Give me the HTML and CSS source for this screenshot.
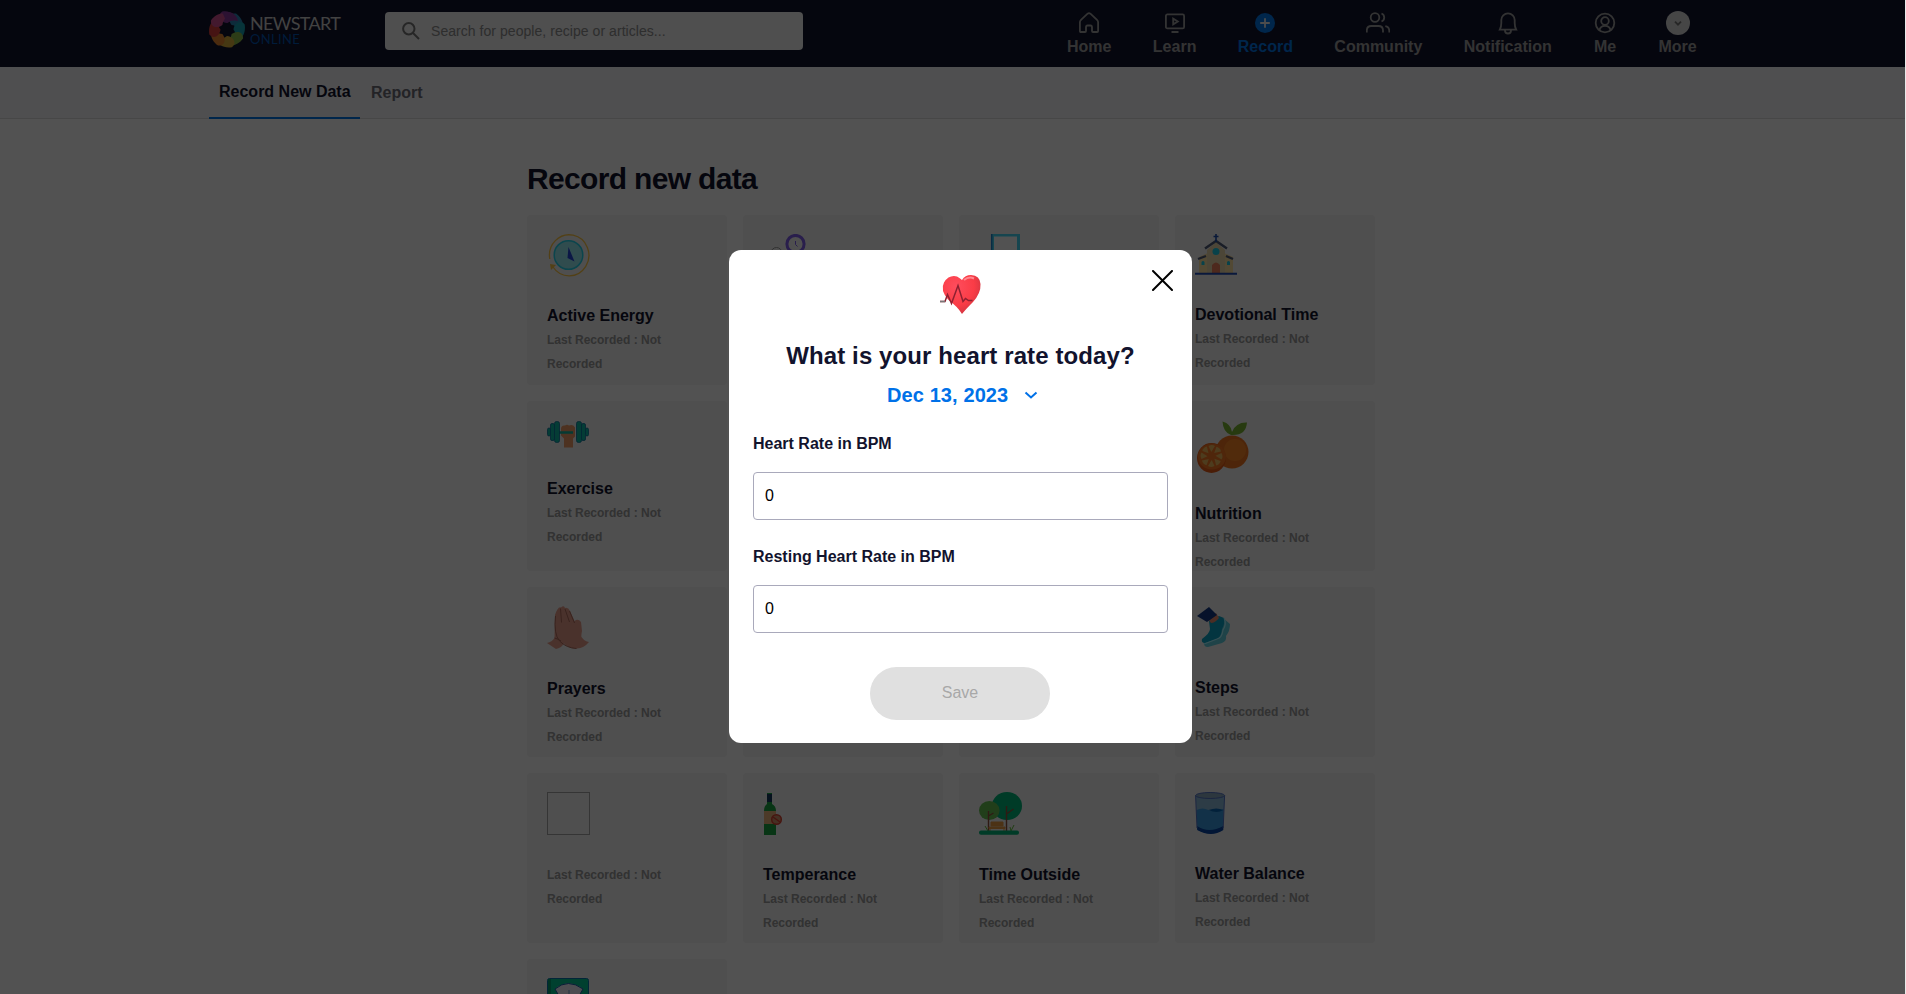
FILE: index.html
```html
<!DOCTYPE html>
<html lang="en">
<head>
<meta charset="utf-8">
<title>Newstart Online - Record New Data</title>
<link rel="stylesheet" href="styles.css">
</head>
<body>
<div class="app">
  <header class="topbar">
    <a class="brand">
      <svg class="brand-mark" width="36" height="37" viewBox="0 0 36 37">
        <defs><path id="leaf" d="M18 12C11 11 8 5 13 0.8C21-.5 28 3 29 10C26 9 22 9 18 12Z"/></defs>
        <g>
          <use href="#leaf" fill="#8a3a9c"/>
          <use href="#leaf" fill="#2b86b8" transform="rotate(45 18 18.5)"/>
          <use href="#leaf" fill="#16a3b5" transform="rotate(90 18 18.5)"/>
          <use href="#leaf" fill="#8cba4a" transform="rotate(135 18 18.5)"/>
          <use href="#leaf" fill="#d9ad3c" transform="rotate(180 18 18.5)"/>
          <use href="#leaf" fill="#e8862f" transform="rotate(225 18 18.5)"/>
          <use href="#leaf" fill="#d8403c" transform="rotate(270 18 18.5)"/>
          <use href="#leaf" fill="#d0508e" transform="rotate(315 18 18.5)"/>
          <path d="M13 .8C21-.5 28 3 29 10C26 9 22 9 18 12Z" fill="#8a3a9c"/>
        </g>
        <circle cx="18" cy="18.5" r="5.6" fill="#12132d"/>
      </svg>
      <span class="brand-text"><span class="brand-top">NEWSTART</span><span class="brand-sub">ONLINE</span></span>
    </a>
    <div class="search">
      <svg width="18" height="18" viewBox="0 0 18 18" fill="none" stroke="#777" stroke-width="2"><circle cx="6.8" cy="6.8" r="5.7"/><path d="M11 11l6 6"/></svg>
      <span>Search for people, recipe or articles...</span>
    </div>
    <nav class="nav">
      <a class="nav-item"><svg width="24" height="24" viewBox="0 0 24 24"><path d="M2.9 11.2Q2.9 9.8 4 8.8L10.600 2.700Q12 1.600 13.400 2.700L20 8.800Q21.100 9.800 21.100 11.200V20Q21.100 21 20.100 21H16Q15 21 15 20V16.500Q15 14.500 13.500 14.500H10.500Q9 14.500 9 16.500V20Q9 21 8 21H3.900Q2.900 21 2.900 20Z"/></svg><span>Home</span></a>
      <a class="nav-item"><svg width="24" height="24" viewBox="0 0 24 24"><rect x="2.900" y="3.400" width="18.200" height="14" rx="1.500"/><path d="M10.200 7.700v5.600l4.600-2.800zM8.500 21h7"/></svg><span>Learn</span></a>
      <a class="nav-item active"><svg width="24" height="24" viewBox="0 0 24 24"><circle cx="12" cy="12" r="10" fill="#0076e8" stroke="none"/><path d="M12 7.200v9.600M7.200 12h9.600" stroke="#eee"/></svg><span>Record</span></a>
      <a class="nav-item"><svg width="24" height="24" viewBox="0 0 24 24"><circle cx="9" cy="6.500" r="4.300"/><path d="M15.500 2.500a4.300 4.300 0 0 1 0 8M.8 21.500v-2Q.8 15 5.300 15H12.500Q17 15 17 19.500v2M19.300 15.200Q23.300 16 23.300 20v1.500"/></svg><span>Community</span></a>
      <a class="nav-item"><svg width="24" height="24" viewBox="0 0 24 24"><path d="M3.800 18.700Q5.300 16 5.300 12V9a6.700 6.700 0 0 1 13.400 0v3Q18.700 16 20.200 18.700ZM9 19.500a3 3 0 0 0 6 0"/></svg><span>Notification</span></a>
      <a class="nav-item"><svg width="24" height="24" viewBox="0 0 24 24"><circle cx="12" cy="12" r="9.300"/><circle cx="12" cy="10" r="3.800"/><path d="M6.500 19.500Q7 14.800 12 14.800T17.500 19.500"/></svg><span>Me</span></a>
      <a class="nav-item"><svg width="24" height="24" viewBox="0 0 24 24"><circle cx="12" cy="12" r="12" fill="#d8d8d8" stroke="none"/><path d="M9 10.700l3 3 3-3" stroke="#777"/></svg><span>More</span></a>
    </nav>
  </header>
  <div class="tabs">
    <a class="tab current">Record New Data</a>
    <a class="tab">Report</a>
  </div>
  <main class="content">
    <h1>Record new data</h1>
    <div class="grid">
      <section class="card">
        <svg width="43" height="43" viewBox="0 0 43 43"><path d="M2.800 25A19.700 20.500 0 1 1 6 33" fill="none" stroke="#d99a35" stroke-width="1.300"/><path d="M3 30l6 1-5 5z" fill="#d99a35"/><circle cx="21.500" cy="21" r="14.300" fill="#74b5ba" stroke="#1ba5b8" stroke-width="1.500"/><path d="M21.500 13l-1 11 7 3.500z" fill="#1c38a8"/></svg>
        <h2>Active Energy</h2><p>Last Recorded : Not Recorded</p>
      </section>
      <section class="card">
        <svg width="43" height="43" viewBox="0 0 43 43" fill="none"><circle cx="32.500" cy="10" r="8.600" stroke="#6348b5" stroke-width="3"/><path d="M32.500 7v3.500l2 2" stroke="#6348b5"/><circle cx="13.500" cy="19" r="5.500" stroke="#777"/></svg>
      </section>
      <section class="card">
        <svg width="43" height="43" viewBox="0 0 43 43"><rect x="13.500" y="1" width="26" height="40" fill="#c3c8d6" stroke="#35a5bd" stroke-width="3"/><path d="M12.700 0v43" stroke="#1766a0" stroke-width="1.500"/></svg>
      </section>
      <section class="card">
        <svg width="42" height="42" viewBox="0 0 42 42"><path d="M4 23l9-4v20H4zM29 19l9 4v16h-9z" fill="#c4ae7c"/><path d="M12 16l9-8 9 8v23H12z" fill="#b5a684"/><path d="M10 14.500l11-7.500 11 7.500M3 25l8-3M31 22l7 3" fill="none" stroke="#3d465c" stroke-width="2.400"/><path d="M21 0v8M18.500 2.500h5" stroke="#173c87" stroke-width="1.600"/><circle cx="21" cy="17.500" r="3.500" fill="#149db2"/><path d="M6.500 31v-3q1.500-2 3 0v3zM32 31v-3q1.500-2 3 0v3z" fill="#149db2"/><path d="M17 39v-8q4-5 8 0v8z" fill="#b86346"/><path d="M0 39.700h42" stroke="#183b8d" stroke-width="2"/></svg>
        <h2>Devotional Time</h2><p>Last Recorded : Not Recorded</p>
      </section>
      <section class="card">
        <svg width="43" height="30" viewBox="0 0 43 30"><path d="M14 9q0-4 4-3.500 2-1.500 4 0 4-1.500 6 2v9l-2 2v9H17v-9l-3-3z" fill="#b87950"/><path d="M12 12.500h14" stroke="#0d8a7a" stroke-width="2.500"/><g fill="#0a8f7f" stroke="#07597a" stroke-width=".8"><rect x=".5" y="8" width="3" height="8" rx="1.500"/><rect x="3.500" y="3.500" width="4" height="17" rx="1.500"/><rect x="7.500" y="1.500" width="5" height="21" rx="2"/><rect x="29.500" y="1.500" width="5" height="21" rx="2"/><rect x="34.500" y="3.500" width="4" height="17" rx="1.500"/><rect x="38.500" y="8" width="3" height="8" rx="1.500"/></g></svg>
        <h2>Exercise</h2><p>Last Recorded : Not Recorded</p>
      </section>
      <section class="card"></section>
      <section class="card"></section>
      <section class="card">
        <svg width="56" height="55" viewBox="0 0 56 55"><circle cx="37" cy="32" r="16.500" fill="#b85a18"/><circle cx="40" cy="30" r="11" fill="#c0681f"/><path d="M36 15Q28 12 27.500 1.500 36 4 37 12 41 2 52 2.500 51 16 36 15Z" fill="#5e8b28"/><ellipse cx="16.500" cy="38" rx="14.500" ry="15" fill="#b04612"/><ellipse cx="17" cy="36.500" rx="14" ry="13" fill="#bd5c1a"/><g fill="#b98f48"><path id="seg" d="M16.300 32l-2.800-6q3.500-2 6.500 0z"/><use href="#seg" transform="rotate(45 16.500 36)"/><use href="#seg" transform="rotate(90 16.500 36)"/><use href="#seg" transform="rotate(135 16.500 36)"/><use href="#seg" transform="rotate(180 16.500 36)"/><use href="#seg" transform="rotate(225 16.500 36)"/><use href="#seg" transform="rotate(270 16.500 36)"/><use href="#seg" transform="rotate(315 16.500 36)"/></g></svg>
        <h2>Nutrition</h2><p>Last Recorded : Not Recorded</p>
      </section>
      <section class="card">
        <svg width="43" height="44" viewBox="0 0 43 44"><path d="M8 9Q11 0 14 1.500q3-2.500 4 .5Q21 1 23 5l4.500 10Q31 12 34 16l1 9q-1 5-.5 6 3 4.500 7.500 5-5 6-12 6.500-8 .5-13-5Q14 42 9 43L0 37q5-1 7.500-5z" fill="#b2786a"/><path d="M8.500 10q-2 18 4 25 7 7 17 7.500M13.500 2.500l1 14M18 3l4.500 13M22.500 5l5 12M7.500 32q4 1 6.500 3" fill="none" stroke="#865347" stroke-width="1"/></svg>
        <h2>Prayers</h2><p>Last Recorded : Not Recorded</p>
      </section>
      <section class="card"></section>
      <section class="card"></section>
      <section class="card">
        <svg width="43" height="43" viewBox="0 0 43 43"><path d="M28 12l7 6q0 7-4 12 1 5-4 7l-14 4q-5 0-4-6z" fill="#4aa0ac"/><path d="M14 15l10-5 5 2q1 6-2 11-1 8-5 10l-12 4q-4 0-3-4 8-6 8-10z" fill="#087f98"/><path d="M29 12q3 6-1 12-1 8-6 9l-13 5" fill="none" stroke="#83bfcb" stroke-width="1.200"/><path d="M13 13l8-6 3 5q-4 5-8 5z" fill="#b46c56"/><path d="M2 10L14 1l8 8-10 7z" fill="#102c66"/></svg>
        <h2>Steps</h2><p>Last Recorded : Not Recorded</p>
      </section>
      <section class="card">
        <div class="missing"></div>
        <p>Last Recorded : Not Recorded</p>
      </section>
      <section class="card">
        <svg width="43" height="44" viewBox="0 0 43 44"><path d="M4 1h5v11q4 2 4 7v24H1V19q0-5 3-7z" fill="#147e32"/><path d="M4 2h5v8H4z" fill="#102d49"/><path d="M1 19h12v13H1z" fill="#b58b60"/><circle cx="13.500" cy="27.500" r="4.800" fill="#a57454" stroke="#a83226" stroke-width="1.500"/><path d="M10 25l7 5" stroke="#a83226" stroke-width="1.500"/></svg>
        <h2>Temperance</h2><p>Last Recorded : Not Recorded</p>
      </section>
      <section class="card">
        <svg width="43" height="44" viewBox="0 0 43 44"><ellipse cx="28" cy="14" rx="15" ry="14" fill="#008c5e"/><ellipse cx="10.300" cy="18.500" rx="10.300" ry="9.500" fill="#4f9540"/><path d="M27.500 14v26M27.500 22l7-5M9.500 19v20M9.500 24l5-3" stroke="#70402e" stroke-width="1.400"/><path d="M12 30h12v4H12zM10 35h16v1.500H10zM11 36v3M25 36v3" fill="#b57832" stroke="#b57832"/><path d="M6 34l3 5M35 33l-3 6M31 35l1 4" stroke="#4b942c"/><rect y="38.500" width="40" height="4.200" rx="2" fill="#008c5e"/></svg>
        <h2>Time Outside</h2><p>Last Recorded : Not Recorded</p>
      </section>
      <section class="card">
        <svg width="43" height="43" viewBox="0 0 43 43"><path d="M.7 3l1.500 34q12 9 26 0L29.600 3z" fill="#6c90a8"/><path d="M1.500 18q6-3 12 0t15-1l-.6 21q-12 6-25.500 0z" fill="#2c76ac"/><path d="M13.500 18q8-3 15 0-7 4-15 0z" fill="#07508c"/><path d="M2 34q12 8 26.300 0v4q-12 8-26 0z" fill="#06347e"/><ellipse cx="15.100" cy="3.500" rx="14.500" ry="3" fill="#6c8494" stroke="#40599a"/><path d="M.6 3.500L2 36M29.600 3.500L28.200 36" stroke="#40599a"/></svg>
        <h2>Water Balance</h2><p>Last Recorded : Not Recorded</p>
      </section>
      <section class="card">
        <svg width="43" height="43" viewBox="0 0 43 43"><rect x=".5" y=".5" width="41" height="41" rx="2" fill="#009a72" stroke="#075b86"/><path d="M1 1h3v40H1z" fill="#007b58"/><path d="M8 11Q21 0 36 11l-4 7H12z" fill="#b8b8c0" stroke="#174784"/><path d="M22 12v8" stroke="#5879a0"/></svg>
      </section>
    </div>
  </main>
</div>
<div class="overlay">
  <div class="modal">
    <button class="close" aria-label="Close"><svg width="21" height="21" viewBox="0 0 21 21"><path d="M1 1l19 19M20 1L1 20" stroke="#000" stroke-width="2" stroke-linecap="round"/></svg></button>
    <svg class="heart" width="42" height="42" viewBox="0 0 42 42">
      <defs><radialGradient id="hg" cx=".35" cy=".3" r=".8"><stop offset="0" stop-color="#ff4d5d"/><stop offset=".6" stop-color="#fa3c46"/><stop offset="1" stop-color="#c83440"/></radialGradient></defs>
      <path d="M23 40Q19 33 9 25.500 1 16 5 8.500 10 .5 18 2.500 21 4 23 6 26 1 32 1 41 1.500 41.500 10 42 19 34 28 27 35 23 40Z" fill="url(#hg)"/>
      <path d="M25 6q5-4 10-1.500" stroke="#ff8890" stroke-width="2" fill="none"/>
      <path d="M1 27.500h5l2.500-7 4 9 6.500-18 5 16 2.500-3 3 2h4" fill="none" stroke="#8e2030" stroke-width="1.500"/><path d="M1 27.500h5" stroke="#777" stroke-width="1.500"/>
    </svg>
    <h2 class="modal-title">What is your heart rate today?</h2>
    <div class="date"><span>Dec 13, 2023</span><svg width="14" height="9" viewBox="0 0 14 9"><path d="M1.500 1.500L7 6.500l5.500-5" fill="none" stroke="#0071e8" stroke-width="2"/></svg></div>
    <label for="hr">Heart Rate in BPM</label>
    <input id="hr" type="text" value="0">
    <label for="rhr">Resting Heart Rate in BPM</label>
    <input id="rhr" type="text" value="0">
    <button class="save">Save</button>
  </div>
</div>
</body>
</html>
```
FILE: styles.css
```css
* { box-sizing: border-box; }
html, body { margin: 0; height: 994px; overflow: hidden; }
body {
  background: #e8e8e8;
  font-family: "Liberation Sans", Arial, sans-serif;
  font-size: 16px;
  color: #12132d;
}
h1, h2, p { margin: 0; }
.app { width: 1905px; height: 994px; overflow: hidden; background: #fff; }

.topbar { display: flex; align-items: flex-start; height: 67px; padding-left: 209px; background: #12132d; }
.brand { display: flex; width: 176px; padding-top: 10.5px; gap: 5px; }
.brand-text { display: flex; flex-direction: column; padding-top: 3px; font-family: Lato, sans-serif; }
.brand-top { font-size: 18px; line-height: 18px; letter-spacing: -0.65px; color: #ccc; }
.brand-sub { font-size: 13px; line-height: 14px; padding-top: 0; letter-spacing: 0.35px; color: #0055b4; }
.search {
  display: flex; align-items: center; gap: 11px;
  width: 418px; height: 38px; margin-top: 12px; padding: 0 17px 1px;
  border-radius: 4px; background: #f4f4f4;
  font-size: 14px; letter-spacing: 0.05px; color: #8e8e8e;
}
.nav { display: flex; gap: 41.4px; margin-left: 264px; padding-top: 11px; }
.nav-item { display: flex; flex-direction: column; align-items: center; font-weight: bold; line-height: 24px; color: #a0a0a0; }
.nav-item svg { display: block; fill: none; stroke: #a0a0a0; stroke-width: 1.8; }
.nav-item.active { color: #0076e8; }

.tabs { display: flex; height: 52px; padding-left: 209px; border-bottom: 1px solid #dcdcdc; background: #f5f5f9; }
.tab { height: 52px; padding: 14px 9px 0 11px; line-height: 24px; font-weight: bold; color: #6d6d78; }
.tab.current { width: 151px; padding: 13px 0 0 10px; color: #12132d; border-bottom: 2px solid #0076e8; white-space: nowrap; }

.content { width: 848px; margin-left: 527px; padding-top: 42px; }
h1 { height: 54px; font-size: 30px; line-height: 36px; letter-spacing: -0.67px; }
.grid { display: grid; grid-template-columns: repeat(4, 200px); grid-auto-rows: 170px; gap: 16px; }
.card { padding: 19px 20px 0; border-radius: 4px; background: #f4f4f4; }
.card svg { display: block; margin-bottom: 27px; filter: brightness(1.3); }
.card h2 { font-size: 16px; line-height: 24px; white-space: nowrap; }
.card p { width: 130px; font-size: 12px; line-height: 24px; font-weight: bold; color: #9b9b9b; }
.missing { width: 43px; height: 43px; margin-bottom: 28px; border: 1px solid #a4a4a4; }

.overlay { position: fixed; top: 0; left: 0; width: 1905px; height: 994px; background: rgba(0, 0, 0, 0.68); }
.modal {
  position: absolute; left: 729px; top: 250px; width: 463px; height: 493px;
  display: flex; flex-direction: column; padding: 24px 24px 0;
  border-radius: 12px; background: #fff;
}
.close { position: absolute; right: 19px; top: 20px; padding: 0; border: 0; background: none; line-height: 0; }
.heart { align-self: center; flex: none; margin-right: 2px; }
.modal-title { margin-top: 24px; font-size: 24px; line-height: 32px; text-align: center; letter-spacing: 0.1px; white-space: nowrap; }
.date { display: flex; align-items: center; gap: 16px; height: 24px; margin: 11px 0 0 134px; font-size: 20px; font-weight: bold; letter-spacing: 0.1px; color: #0071e8; }
.modal label { height: 40px; margin-top: 25px; line-height: 24px; font-weight: bold; }
.modal input {
  height: 48px; padding: 0 11px; border: 1px solid #a9a9bb; border-radius: 4px;
  background: #fff; font: 16px "Liberation Sans", Arial, sans-serif; color: #000;
}
.save {
  align-self: center; width: 180px; height: 53px; margin: 34px 1px 0 0; padding: 0 0 1px;
  border: 0; border-radius: 27px; background: #e0e0e0;
  font: 16px "Liberation Sans", Arial, sans-serif; color: #a8a8a8;
}
```
